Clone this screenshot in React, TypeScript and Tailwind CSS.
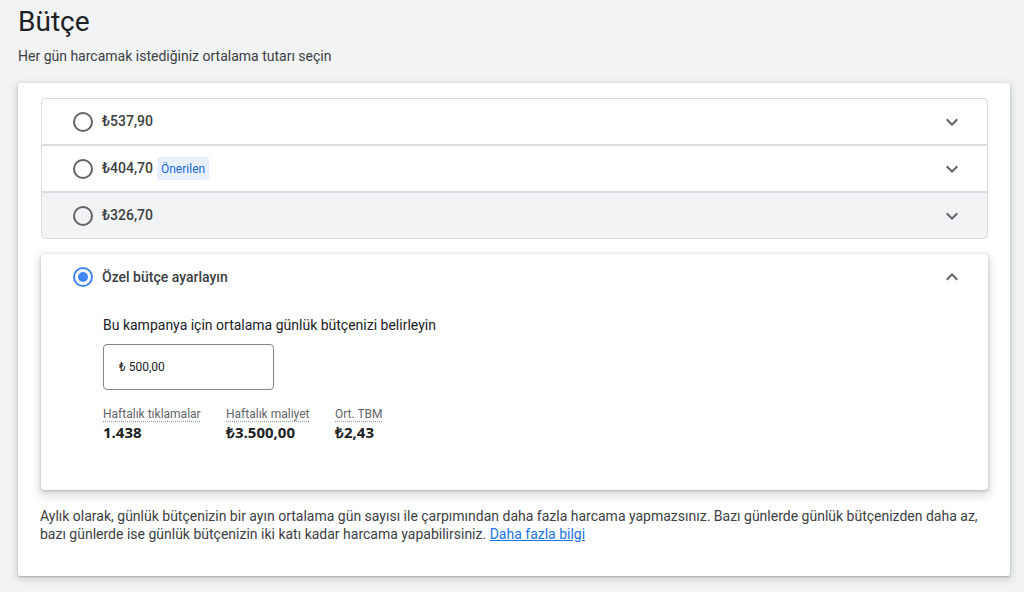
import React from "react";

function Chevron({ up = false }: { up?: boolean }) {
  return (
    <svg width="24" height="24" viewBox="0 0 24 24" className="text-[#5f6368]" fill="currentColor">
      {up ? (
        <path d="M12 8l-6 6 1.41 1.41L12 10.83l4.59 4.58L18 14z" />
      ) : (
        <path d="M16.59 8.59L12 13.17 7.41 8.59 6 10l6 6 6-6z" />
      )}
    </svg>
  );
}

function Radio({ checked = false }: { checked?: boolean }) {
  return checked ? (
    <span className="w-[20px] h-[20px] rounded-full border-2 border-[#4285f4] flex items-center justify-center shrink-0">
      <span className="w-[10px] h-[10px] rounded-full bg-[#4285f4]" />
    </span>
  ) : (
    <span className="w-[20px] h-[20px] rounded-full border-2 border-[#5f6368] shrink-0" />
  );
}

export default function App() {
  const options = [
    { amount: "₺537,90", recommended: false, hover: false },
    { amount: "₺404,70", recommended: true, hover: false },
    { amount: "₺326,70", recommended: false, hover: true },
  ];
  const stats = [
    { label: "Haftalık tıklamalar", value: "1.438", w: "w-[123px]" },
    { label: "Haftalık maliyet", value: "₺3.500,00", w: "w-[109px]" },
    { label: "Ort. TBM", value: "₺2,43", w: "w-[80px]" },
  ];
  return (
    <div className="w-[1024px] h-[592px] bg-[#f1f3f4] overflow-hidden font-['Roboto',sans-serif] text-[#202124]">
      <div className="pl-[18px] pr-[14px] pt-[4px]">
        <h1 className="text-[28px] leading-[36px] font-normal text-[#202124]">Bütçe</h1>
        <p className="mt-[6px] text-[14px] leading-[20px] text-[#3c4043]">
          Her gün harcamak istediğiniz ortalama tutarı seçin
        </p>

        <div className="mt-[17px] bg-white rounded-[2px] shadow-[0_1px_2px_rgba(60,64,67,0.3),0_2px_6px_2px_rgba(60,64,67,0.15)] pt-[15px] pl-[23px] pr-[22px] pb-[33px]">
          <div className="flex flex-col">
            {options.map((o, i) => (
              <div
                key={i}
                className={
                  "h-[47px] flex items-center border border-[#dadce0] pl-[31px] pr-[23px] " +
                  (i === 0 ? "rounded-t-[4px] " : "") +
                  (i === options.length - 1 ? "rounded-b-[4px] " : "") +
                  (o.hover ? "bg-[#f1f3f4]" : "bg-white")
                }
              >
                <Radio />
                <span className="ml-[9px] text-[14px] font-medium text-[#3c4043]">{o.amount}</span>
                {o.recommended && (
                  <span className="ml-[4px] px-[4px] h-[23px] flex items-center rounded-[2px] bg-[#e8f0fe] text-[#1967d2] text-[12px]">
                    Önerilen
                  </span>
                )}
                <span className="ml-auto">
                  <Chevron />
                </span>
              </div>
            ))}
          </div>

          <div className="mt-[15px] h-[236px] rounded-[4px] bg-white shadow-[0_1px_3px_rgba(60,64,67,0.3),0_4px_8px_3px_rgba(60,64,67,0.15)]">
            <div className="h-[46px] flex items-center pl-[32px] pr-[24px]">
              <Radio checked />
              <span className="ml-[9px] text-[14px] font-medium text-[#3c4043]">Özel bütçe ayarlayın</span>
              <span className="ml-auto">
                <Chevron up />
              </span>
            </div>
            <div className="pl-[62px] pt-[15px]">
              <p className="text-[14px] leading-[20px] text-[#202124]">
                Bu kampanya için ortalama günlük bütçenizi belirleyin
              </p>
              <div className="mt-[9px] w-[171px] h-[46px] border border-[#80868b] rounded-[4px] flex items-center pl-[15px] text-[12px] text-[#202124]">
                ₺ 500,00
              </div>
              <div className="mt-[16px] flex">
                {stats.map((s, i) => (
                  <div key={i} className={s.w}>
                    <div className="text-[12px] leading-[16px] text-[#5f6368] underline decoration-dotted decoration-[#9aa0a6] underline-offset-[3px]">
                      {s.label}
                    </div>
                    <div className="text-[15px] leading-[20px] font-bold text-[#202124] font-['Open_Sans',sans-serif]">
                      {s.value}
                    </div>
                  </div>
                ))}
              </div>
            </div>
          </div>

          <p className="mt-[17px] -ml-[1px] text-[14px] leading-[18px] text-[#3c4043]">
            Aylık olarak, günlük bütçenizin bir ayın ortalama gün sayısı ile çarpımından daha fazla harcama yapmazsınız. Bazı günlerde günlük bütçenizden daha az, bazı günlerde ise günlük bütçenizin iki katı kadar harcama yapabilirsiniz.{" "}
            <a className="text-[#1a73e8] underline">Daha fazla bilgi</a>
          </p>
        </div>
      </div>
    </div>
  );
}
